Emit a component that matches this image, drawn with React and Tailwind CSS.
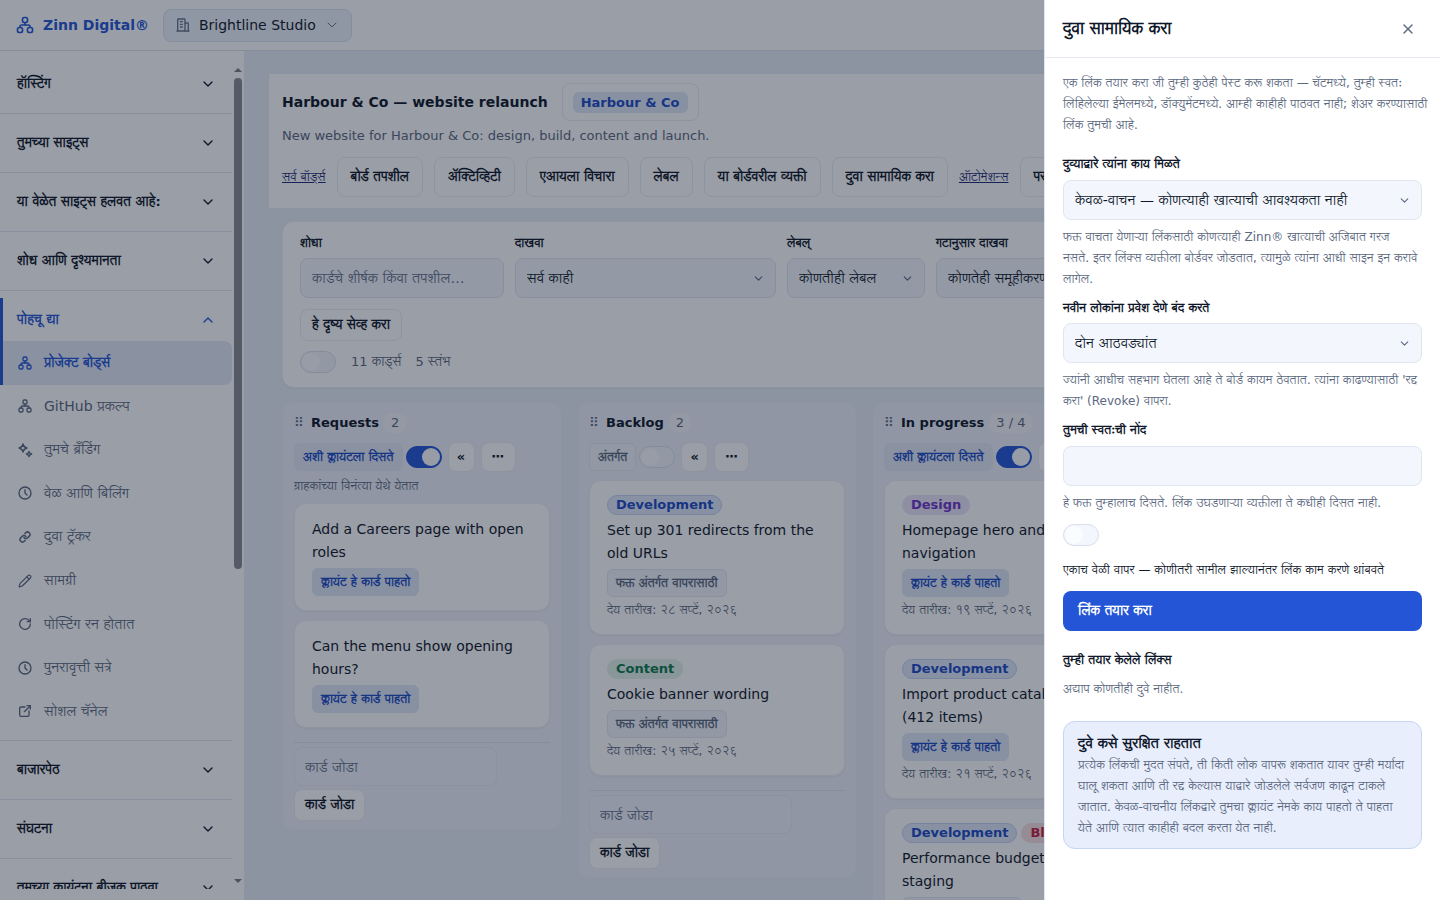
import React from "react";
import clsx from "clsx";
import { ChevronDown, ChevronUp, Link, Pencil, X } from "lucide-react";
import { TbClock, TbExternalLink, TbSitemap } from "react-icons/tb";

const SparkleIcon = () => (
  <svg
    viewBox="0 0 24 24"
    className="size-4"
    fill="none"
    stroke="currentColor"
    strokeWidth="2"
    strokeLinejoin="round"
    aria-hidden="true"
  >
    <path d="M9 3c.8 4 2 5.200 6 6c-4 .8-5.200 2-6 6c-.8-4-2-5.200-6-6c4-.8 5.200-2 6-6z" />
    <path d="M18 14c.5 2.600 1.400 3.500 4 4c-2.600 .5-3.500 1.400-4 4c-.5-2.600-1.400-3.500-4-4c2.600-.5 3.500-1.400 4-4z" />
  </svg>
);

const RefreshIcon = () => (
  <svg
    viewBox="0 0 24 24"
    className="size-4"
    fill="none"
    stroke="currentColor"
    strokeWidth="2"
    strokeLinecap="round"
    strokeLinejoin="round"
    aria-hidden="true"
  >
    <path d="M20 12a8 8 0 1 1-2.340-5.660L20 8.500" />
    <path d="M20 4v4.500h-4.500" />
  </svg>
);

const BuildingIcon = () => (
  <svg
    viewBox="0 0 24 24"
    className="size-4 text-[#64748b]"
    fill="none"
    stroke="currentColor"
    strokeWidth="2"
    strokeLinecap="round"
    strokeLinejoin="round"
    aria-hidden="true"
  >
    <path d="M4 21V4a1 1 0 0 1 1-1h9a1 1 0 0 1 1 1v17" />
    <path d="M15 9h4a1 1 0 0 1 1 1v11" />
    <path d="M3 21h18M8 7h3M8 11h3M8 15h3" />
  </svg>
);

const navItems = [
  { label: "प्रोजेक्ट बोर्ड्स", icon: <TbSitemap size={16} />, active: true },
  { label: "GitHub प्रकल्प", icon: <TbSitemap size={16} /> },
  { label: "तुमचे ब्रँडिंग", icon: <SparkleIcon /> },
  { label: "वेळ आणि बिलिंग", icon: <TbClock size={16} /> },
  {
    label: "दुवा ट्रॅकर",
    icon: <Link size={12} strokeWidth={3} className="mx-[2px]" />,
  },
  { label: "सामग्री", icon: <Pencil size={14} className="mx-px" /> },
  { label: "पोस्टिंग रन होतात", icon: <RefreshIcon /> },
  { label: "पुनरावृत्ती सत्रे", icon: <TbClock size={16} /> },
  { label: "सोशल चॅनेल", icon: <TbExternalLink size={16} /> },
];

const columns = [
  {
    name: "Requests",
    count: "2",
    shared: true,
    note: "ग्राहकांच्या विनंत्या येथे येतात",
    cards: [
      { title: "Add a Careers page with open roles", client: true },
      { title: "Can the menu show opening hours?", client: true },
    ],
  },
  {
    name: "Backlog",
    count: "2",
    shared: false,
    cards: [
      {
        tags: ["Development"],
        title: "Set up 301 redirects from the old URLs",
        client: false,
        due: "२८ सप्टें, २०२६",
      },
      {
        tags: ["Content"],
        title: "Cookie banner wording",
        client: false,
        due: "२५ सप्टें, २०२६",
      },
    ],
  },
  {
    name: "In progress",
    count: "3 / 4",
    shared: true,
    cards: [
      {
        tags: ["Design"],
        title: "Homepage hero and navigation",
        client: true,
        due: "१९ सप्टें, २०२६",
      },
      {
        tags: ["Development"],
        title: "Import product catalogue (412\u00a0items)",
        client: true,
        due: "२१ सप्टें, २०२६",
      },
      {
        tags: ["Development", "Blocked"],
        title: "Performance budget on staging",
        client: false,
        due: "२२ सप्टें, २०२६",
      },
    ],
  },
];

const tagStyles = {
  Development: "border-[#c3d1f3] bg-[#dfe8fa] text-[#1d4bc4]",
  Content: "border-[#e2f1ea] bg-[#e2f1ea] text-[#0b7a4b]",
  Design: "border-[#ebe5fa] bg-[#ebe5fa] text-[#6d35c9]",
  Blocked: "border-[#f9e1e3] bg-[#f9e1e3] text-[#c81e3c]",
};

const Toggle = ({ label, checked = false }) => (
  <input
    type="checkbox"
    role="switch"
    aria-label={label}
    defaultChecked={checked}
    className="h-[22px] w-9 shrink-0 appearance-none rounded-full border border-[#d9e0ec] bg-[#f3f6fc] p-px before:block before:size-[18px] before:rounded-full before:bg-[#fafcff] checked:border-[#2355d6] checked:bg-[#2355d6] checked:before:translate-x-[14px]"
  />
);

const SelectBox = ({ id, value, className }) => (
  <div className={clsx("grid items-center", className)}>
    <select
      id={id}
      className="col-start-1 row-start-1 h-10 w-full appearance-none rounded-lg border border-[#dfe6f1] bg-[#f3f7fd] px-[11px] text-[14px] text-[#0f172a]"
    >
      <option>{value}</option>
    </select>
    <ChevronDown
      size={13}
      className="pointer-events-none col-start-1 row-start-1 mr-[11px] justify-self-end text-[#5b6880]"
    />
  </div>
);

const SmallButton = ({ children, className, ...props }) => (
  <button
    type="button"
    className={clsx(
      "rounded-lg border border-[#e9eef5] bg-white text-[13px] font-bold whitespace-nowrap text-[#0f172a]",
      className
    )}
    {...props}
  >
    {children}
  </button>
);

const ClientChip = ({ client }) => (
  <span
    className={clsx(
      "flex h-7 items-center self-start rounded-md border px-2 text-[12px] font-bold",
      client
        ? "border-[#e1e9f8] bg-[#e1e9f8] text-[#1d4bc4]"
        : "border-[#e2e8f2] bg-[#f1f5fb] text-[#5b6880]"
    )}
  >
    {client ? "क्लायंट हे कार्ड पाहतो" : "फक्त अंतर्गत वापरासाठी"}
  </span>
);

const BoardCard = ({ card }) => (
  <article className="flex flex-col gap-1 rounded-xl border border-[#edf1f7] bg-white px-[17px] py-[14px] shadow-xs">
    {card.tags && (
      <div className="flex gap-1">
        {card.tags.map((tag) => (
          <span
            key={tag}
            className={clsx(
              "flex h-5 items-center rounded-full border px-2 text-[13px] font-bold",
              tagStyles[tag]
            )}
          >
            {tag}
          </span>
        ))}
      </div>
    )}
    <h3 className="text-[14px] leading-[23px]">{card.title}</h3>
    <ClientChip client={card.client} />
    {card.due && (
      <p className="text-[12px] leading-[19px] text-[#5b6880]">
        देय तारीख: {card.due}
      </p>
    )}
  </article>
);

const BoardColumn = ({ column }) => (
  <section className="w-[280px] shrink-0 rounded-xl border border-[#e9eef7] bg-[#eef2fa] px-[11px] pt-2 pb-2">
    <header className="flex h-6 items-center">
      <span className="w-[17px] text-[13px] text-[#5b6880]" aria-hidden="true">
        ⠿
      </span>
      <h2 className="text-[13px] font-bold">{column.name}</h2>
      <span className="ml-1 min-w-6 rounded-full bg-[#f4f7fc] px-2 text-center text-[13px] leading-5 text-[#5b6880]">
        {column.count}
      </span>
    </header>
    <div className="mt-[7px] flex h-[30px] items-center">
      <span
        className={clsx(
          "flex h-7 items-center rounded-md border px-2 text-[12px] font-bold whitespace-nowrap",
          column.shared
            ? "border-[#e4ebf8] bg-[#e4ebf8] text-[#1d4bc4]"
            : "border-[#e2e8f2] bg-[#f1f5fb] text-[#5b6880]"
        )}
      >
        {column.shared ? "अशी क्लायंटला दिसते" : "अंतर्गत"}
      </span>
      <span className="ml-[3px] flex">
        <Toggle label={`${column.name} क्लायंटला दिसते`} checked={column.shared} />
      </span>
      <SmallButton className="ml-[6px] h-[30px] w-[27px]">«</SmallButton>
      <SmallButton className="ml-[6px] h-[30px] w-[35px]">⋯</SmallButton>
    </div>
    {column.note && (
      <p className="mt-[5px] text-[12px] leading-[18px] text-[#5b6880]">
        {column.note}
      </p>
    )}
    <div className="mt-2 flex flex-col gap-[9px]">
      {column.cards.map((card) => (
        <BoardCard key={card.title} card={card} />
      ))}
    </div>
    <form className="mt-[14px] border-t border-[#dbe2ee] pt-1">
      <input
        type="text"
        aria-label={`${column.name}: कार्ड जोडा`}
        placeholder="कार्ड जोडा"
        className="block h-[39px] w-[203px] rounded-lg border border-[#e5eaf4] bg-[#eff3fb] px-[10px] text-[14px] placeholder:text-[#64708a]"
      />
      <SmallButton className="mt-[3px] block h-8 px-[10px]">कार्ड जोडा</SmallButton>
    </form>
  </section>
);

const NavSection = ({ label }) => (
  <button
    type="button"
    className="flex h-[59px] w-full shrink-0 items-center justify-between border-b border-[#e0e6f0] pr-4 pl-[17px] text-[13px] font-bold"
  >
    {label}
    <ChevronDown size={16} />
  </button>
);

const Sidebar = () => (
  <aside className="flex w-[244px] shrink-0 bg-white pt-1 pb-[11px]">
    <nav className="flex min-w-0 flex-1 flex-col overflow-hidden">
      <NavSection label="हॉस्टिंग" />
      <NavSection label="तुमच्या साइट्स" />
      <NavSection label="या वेळेत साइट्स हलवत आहे:" />
      <NavSection label="शोध आणि दृश्यमानता" />
      <div className="shrink-0 border-b border-[#e0e6f0] py-[7px]">
        <button
          type="button"
          className="flex h-[43px] w-full items-center justify-between border-l-[3px] border-[#2355d6] pr-4 pl-[14px] text-[13px] font-bold text-[#2355d6]"
        >
          पोहचू द्या
          <ChevronUp size={16} />
        </button>
        <ul className="grid h-[392px] auto-rows-fr">
          {navItems.map((item) => (
            <li key={item.label} className="flex">
              <a
                href="#"
                className={clsx(
                  "flex flex-1 items-center gap-[11px] border-l-[3px] pl-[14px]",
                  item.active
                    ? "rounded-r-lg border-[#2355d6] bg-[#e3ebf7] text-[13px] font-bold text-[#2355d6]"
                    : "border-transparent text-[14px] text-[#5b6880]"
                )}
              >
                {item.icon}
                {item.label}
              </a>
            </li>
          ))}
        </ul>
      </div>
      <NavSection label="बाजारपेठ" />
      <NavSection label="संघटना" />
      <NavSection label="तुमच्या क्लायंटना बीजक पाठवा" />
    </nav>
    <div
      className="flex w-3 flex-col items-center justify-between pt-[13px] pb-[6px]"
      aria-hidden="true"
    >
      <div className="flex flex-col items-center gap-1">
        <svg viewBox="0 0 8 4" className="h-1 w-2 fill-[#7b8089]">
          <path d="M0 4L4 0L8 4z" />
        </svg>
        <div className="mt-[2px] h-[491px] w-2 rounded-full bg-[#878b92]" />
      </div>
      <svg viewBox="0 0 8 4" className="h-1 w-2 fill-[#7b8089]">
        <path d="M0 0L4 4L8 0z" />
      </svg>
    </div>
  </aside>
);

const boardActions = [
  "बोर्ड तपशील",
  "ॲक्टिव्हिटी",
  "एआयला विचारा",
  "लेबल",
  "या बोर्डवरील व्यक्ती",
  "दुवा सामायिक करा",
];

const BoardHeader = () => (
  <section className="overflow-hidden border border-[#e6ebf4] bg-white px-[13px] pt-[9px] pb-[11px]">
    <div className="flex items-center gap-[14px]">
      <h1 className="text-[14px] font-bold">Harbour &amp; Co — website relaunch</h1>
      <SmallButton className="h-[38px] px-[10px]">
        <span className="block rounded-md bg-[#e1e9f8] px-2 leading-[21px] text-[#1d4bc4]">
          Harbour &amp; Co
        </span>
      </SmallButton>
    </div>
    <p className="mt-1 text-[13px] leading-[21px] text-[#5b6880]">
      New website for Harbour &amp; Co: design, build, content and launch.
    </p>
    <div className="mt-[11px] flex items-center gap-[11px]">
      <a href="#" className="text-[12px] whitespace-nowrap text-[#1e2a78] underline">
        सर्व बॉर्ड्स
      </a>
      {boardActions.map((label) => (
        <SmallButton key={label} className="h-10 px-[13px]">
          {label}
        </SmallButton>
      ))}
      <a href="#" className="text-[12px] whitespace-nowrap text-[#1e2a78] underline">
        ऑटोमेशन्स
      </a>
      <SmallButton className="h-10 px-[13px]">परवानग्या</SmallButton>
    </div>
  </section>
);

const FilterField = ({ id, label, children }) => (
  <div className="flex flex-col gap-1">
    <label htmlFor={id} className="text-[12px] leading-[21px] font-bold">
      {label}
    </label>
    {children}
  </div>
);

const FilterPanel = () => (
  <section className="mx-[14px] mt-3 rounded-xl border border-[#edf1f7] bg-white px-[17px] pt-[11px] pb-[14px] shadow-xs">
    <div className="flex gap-[11px]">
      <FilterField id="search" label="शोधा">
        <input
          id="search"
          type="search"
          placeholder="कार्डचे शीर्षक किंवा तपशील…"
          className="h-10 w-[204px] rounded-lg border border-[#dfe6f1] bg-[#f3f7fd] px-[11px] text-[14px] placeholder:text-[#64708a]"
        />
      </FilterField>
      <FilterField id="show" label="दाखवा">
        <SelectBox id="show" value="सर्व काही" className="w-[261px]" />
      </FilterField>
      <FilterField id="label" label="लेबल्">
        <SelectBox id="label" value="कोणतीही लेबल" className="w-[138px]" />
      </FilterField>
      <FilterField id="group" label="गटानुसार दाखवा">
        <SelectBox id="group" value="कोणतेही समूहीकरण नाही" className="w-[220px]" />
      </FilterField>
    </div>
    <SmallButton className="mt-[11px] block h-8 px-[11px]">
      हे दृष्य सेव्ह करा
    </SmallButton>
    <div className="mt-[10px] flex h-[22px] items-center text-[13px] text-[#5b6880]">
      <Toggle label="संक्षिप्त दृश्य" />
      <span className="ml-[15px]">11 कार्ड्स</span>
      <span className="ml-[14px]">5 स्तंभ</span>
    </div>
  </section>
);

const labelClass = "block text-[12px] leading-[21px] font-bold";
const helpClass = "text-[12px] leading-[21px] text-[#5b6880]";

const ShareDrawer = () => (
  <aside
    role="dialog"
    aria-labelledby="share-title"
    className="fixed inset-y-0 right-0 w-[396px] overflow-hidden border-l border-[#dfe6f1] bg-white"
  >
    <header className="flex h-[58px] items-center justify-between border-b border-[#e6ebf2] pr-6 pl-[18px]">
      <h2 id="share-title" className="text-[16px] font-bold">
        दुवा सामायिक करा
      </h2>
      <button type="button" aria-label="बंद करा" className="text-[#5b6880]">
        <X size={16} strokeWidth={2} />
      </button>
    </header>
    <div className="px-[18px] pt-[15px]">
      <p className={clsx(helpClass, "-mr-2")}>
        एक लिंक तयार करा जी तुम्ही कुठेही पेस्ट करू शकता — चॅटमध्ये, तुम्ही स्वतः
        लिहिलेल्या ईमेलमध्ये, डॉक्युमेंटमध्ये. आम्ही काहीही पाठवत नाही; शेअर
        करण्यासाठी लिंक तुमची आहे.
      </p>
      <label htmlFor="access" className={clsx(labelClass, "mt-[18px]")}>
        दुव्याद्वारे त्यांना काय मिळते
      </label>
      <SelectBox
        id="access"
        value="केवळ-वाचन — कोणत्याही खात्याची आवश्यकता नाही"
        className="mt-[5px]"
      />
      <p className={clsx(helpClass, "mt-[7px] -mr-2")}>
        फक्त वाचता येणाऱ्या लिंकसाठी कोणत्याही Zinn® खात्याची अजिबात गरज
        <br />
        नसते. इतर लिंक्स व्यक्तीला बोर्डवर जोडतात, त्यामुळे त्यांना आधी साइन इन
        करावे लागेल.
      </p>
      <label htmlFor="expiry" className={clsx(labelClass, "mt-2")}>
        नवीन लोकांना प्रवेश देणे बंद करते
      </label>
      <SelectBox id="expiry" value="दोन आठवड्यांत" className="mt-1" />
      <p className={clsx(helpClass, "mt-[7px]")}>
        ज्यांनी आधीच सहभाग घेतला आहे ते बोर्ड कायम ठेवतात. त्यांना काढण्यासाठी 'रद्द
        करा' (Revoke) वापरा.
      </p>
      <label htmlFor="note" className={clsx(labelClass, "mt-2")}>
        तुमची स्वतःची नोंद
      </label>
      <input
        id="note"
        type="text"
        className="mt-[5px] block h-10 w-full rounded-lg border border-[#dfe6f1] bg-[#f3f7fd] px-[11px] text-[14px]"
      />
      <p className={clsx(helpClass, "mt-[7px]")}>
        हे फक्त तुम्हालाच दिसते. लिंक उघडणाऱ्या व्यक्तीला ते कधीही दिसत नाही.
      </p>
      <div className="mt-[10px] flex">
        <Toggle label="एकाच वेळी वापर" />
      </div>
      <p className="mt-[14px] text-[12px] leading-[21px]">
        एकाच वेळी वापर — कोणीतरी सामील झाल्यानंतर लिंक काम करणे थांबवते
      </p>
      <button
        type="button"
        className="mt-[10px] h-10 w-full rounded-lg bg-[#2355d6] px-[15px] text-left text-[13px] font-bold text-white"
      >
        लिंक तयार करा
      </button>
      <h3 className={clsx(labelClass, "mt-[19px]")}>तुम्ही तयार केलेले लिंक्स</h3>
      <p className={clsx(helpClass, "mt-2")}>अद्याप कोणतीही दुवे नाहीत.</p>
      <div className="mt-[21px] rounded-xl border border-[#c6d5f6] bg-[#e8eefc] px-[14px] pt-[9px] pb-[9px]">
        <h3 className="text-[14px] leading-6 font-bold">दुवे कसे सुरक्षित राहतात</h3>
        <p className={helpClass}>
          प्रत्येक लिंकची मुदत संपते, ती किती लोक वापरू शकतात यावर तुम्ही मर्यादा
          घालू शकता आणि ती रद्द केल्यास याद्वारे जोडलेले सर्वजण काढून टाकले जातात.
          केवळ-वाचनीय लिंकद्वारे तुमचा क्लायंट नेमके काय पाहतो ते पाहता येते आणि
          त्यात काहीही बदल करता येत नाही.
        </p>
      </div>
    </div>
  </aside>
);

export default function App() {
  return (
    <div className="flex h-screen flex-col overflow-hidden bg-[#e9eef7] font-['DejaVu_Sans','Lohit_Devanagari','Noto_Sans',sans-serif] text-[#0f172a]">
      <header className="flex h-[51px] shrink-0 items-center border-b border-[#dbe2ee] bg-white pl-[15px]">
        <a
          href="#"
          className="flex items-center gap-2 text-[14px] font-bold text-[#2355d6]"
        >
          <TbSitemap size={20} />
          Zinn Digital®
        </a>
        <button
          type="button"
          className="ml-[14px] flex h-[33px] items-center gap-2 rounded-lg border border-[#dbe4f2] bg-[#eef3fb] px-[11px] text-[14px]"
        >
          <BuildingIcon />
          Brightline Studio
          <ChevronDown size={16} strokeWidth={1.5} className="text-[#64748b]" />
        </button>
      </header>
      <div className="flex min-h-0 flex-1">
        <Sidebar />
        <main className="min-w-0 flex-1 overflow-hidden px-6 pt-[22px]">
          <BoardHeader />
          <FilterPanel />
          <div className="mt-[14px] ml-[14px] flex items-start gap-[15px]">
            {columns.map((column) => (
              <BoardColumn key={column.name} column={column} />
            ))}
          </div>
        </main>
      </div>
      <div className="fixed inset-0 bg-[#0f172a]/42" />
      <ShareDrawer />
    </div>
  );
}
